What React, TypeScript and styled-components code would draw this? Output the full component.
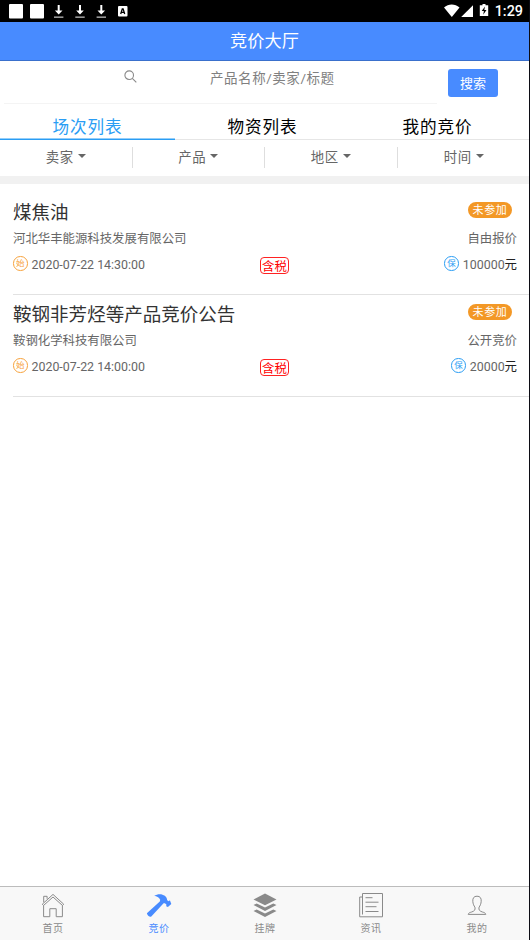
import React from "react";
import styled, { createGlobalStyle } from "styled-components";

const Global = createGlobalStyle`
  * { box-sizing: border-box; }
  body { margin: 0; background: #fff; }
`;

const Screen = styled.div`
  width: 530px;
  height: 940px;
  display: flex;
  flex-direction: column;
  background: #fff;
  border-right: 1px solid #0c0c14;
  font-family: Roboto, "Noto Sans CJK SC", sans-serif;
  color: #666;
  overflow: hidden;
  white-space: nowrap;
`;

const StatusBar = styled.div`
  height: 22px;
  flex: none;
  display: flex;
  justify-content: space-between;
  background: #000;
`;

const Clock = styled.span`
  color: #fff;
  font-size: 14.4px;
  line-height: 23px;
  font-weight: 500;
  margin-right: 6px;
`;

const StatusRight = styled.div`
  display: flex;
`;

const Header = styled.h1`
  height: 39px;
  flex: none;
  margin: 0;
  background: #488bff;
  border-bottom: 1px solid #3a70cc;
  color: #fff;
  font-size: 17.2px;
  font-weight: 400;
  line-height: 38px;
  text-align: center;
`;

const SearchRow = styled.form`
  height: 50px;
  flex: none;
  display: flex;
`;

const SearchField = styled.div`
  width: 433px;
  height: 43px;
  margin-left: 4px;
  padding-left: 120px;
  border-bottom: 1px solid #f4f4f4;
  display: flex;
  font-size: 13.5px;
  letter-spacing: 0.55px;
  line-height: 35px;
  color: #808080;
`;

const SearchIcon = styled.svg`
  width: 13px;
  height: 13px;
  margin: 9px 73px 0 0;
`;

const SearchButton = styled.button`
  width: 50px;
  height: 28px;
  margin: 8px 0 0 11px;
  padding: 0;
  border: 0;
  border-radius: 3px;
  background: #488bff;
  color: #fff;
  font: 13px/27px Roboto, "Noto Sans CJK SC", sans-serif;
`;

const Tabs = styled.nav`
  height: 29px;
  flex: none;
  display: flex;
  box-shadow: inset 0 -1px #e6e6e6;
`;

const Tab = styled.a<{ $active?: boolean }>`
  width: 175px;
  height: 29px;
  box-shadow: ${(p) => (p.$active ? "inset 0 -1.5px #2a9df4" : "none")};
  color: ${(p) => (p.$active ? "#2a9df4" : "#000")};
  font-size: 16.6px;
  letter-spacing: 0.9px;
  line-height: 34px;
  text-align: center;
`;

const Filters = styled.div`
  height: 43.5px;
  flex: none;
  display: grid;
  grid-template-columns: repeat(4, 132.5px);
  border-bottom: 8px solid #f1f1f1;
`;

const Filter = styled.div`
  height: 21px;
  margin-top: 7px;
  display: flex;
  justify-content: center;
  border-right: 1px solid #dedede;
  font-size: 13.4px;
  letter-spacing: 0.6px;
  line-height: 22px;
  &:last-child { border-right: 0; }
`;

const Caret = styled.i`
  width: 0;
  height: 0;
  margin: 7px 0 0 4px;
  border: 4px solid transparent;
  border-top: 4.5px solid #666;
  border-bottom: 0;
`;

const List = styled.main`
  flex: 1;
  padding: 9.5px 0 0 13px;
`;

const Card = styled.article`
  height: 102px;
  padding-right: 12px;
  border-bottom: 1px solid #e2e2e2;
  font-size: 12.4px;
`;

const Line = styled.div<{ $h: number }>`
  height: ${(p) => p.$h}px;
  line-height: ${(p) => p.$h}px;
  display: flex;
  justify-content: space-between;
`;

const Title = styled.h2`
  margin: 0;
  color: #333;
  font-size: 18.55px;
  line-height: 41px;
  font-weight: 400;
`;

const Badge = styled.span`
  width: 44px;
  height: 16px;
  margin: 9px 5px 0 0;
  border-radius: 8px;
  background: #f39826;
  color: #fff;
  font-size: 11px;
  letter-spacing: 0.6px;
  line-height: 17px;
  text-align: center;
`;

const MetaRow = styled.div`
  display: grid;
  grid-template-columns: 247px 29px 1fr;
  height: 34px;
  line-height: 37px;
`;

const Meta = styled.div<{ $end?: boolean }>`
  display: flex;
  justify-content: ${(p) => (p.$end ? "flex-end" : "flex-start")};
`;

const Circle = styled.span<{ $tone: string }>`
  width: 14.5px;
  height: 14.5px;
  margin: 10px 4px 0 0;
  border: 1px solid ${(p) => p.$tone};
  border-radius: 50%;
  color: ${(p) => p.$tone};
  font-size: 8.5px;
  line-height: 12px;
  text-align: center;
`;

const Amount = styled.span`
  line-height: 38px;
`;

const Unit = styled.span`
  color: #222;
`;

const TaxTag = styled.span`
  height: 17px;
  margin-top: 11px;
  border: 1px solid #f22;
  border-radius: 4px;
  color: #f00;
  font-size: 12.4px;
  line-height: 17px;
  text-align: center;
`;

const TabBar = styled.footer`
  height: 54px;
  flex: none;
  display: grid;
  grid-template-columns: repeat(5, 106px);
  background: #f8f8f8;
  border-top: 1px solid #bcbcbc;
`;

const TabItem = styled.a<{ $active?: boolean }>`
  display: flex;
  flex-direction: column;
  align-items: center;
  padding-top: 4px;
  color: ${(p) => (p.$active ? "#488bff" : "#8a8a8a")};
  font-size: 10px;
  letter-spacing: 0.4px;
  line-height: 20px;
`;

const TabIcon = styled.svg`
  width: 28px;
  height: 28px;
  fill: none;
  stroke: currentColor;
  stroke-width: 1;
`;

const auctions = [
  { title: "煤焦油", company: "河北华丰能源科技发展有限公司", mode: "自由报价", time: "2020-07-22 14:30:00", deposit: "100000" },
  { title: "鞍钢非芳烃等产品竞价公告", company: "鞍钢化学科技有限公司", mode: "公开竞价", time: "2020-07-22 14:00:00", deposit: "20000" },
];

const nav = [
  {
    label: "首页",
    icon: (
      <>
        <path d="M3.3 13.2 14 3.4l10.7 9.8-1.2 1.3L14 6l-9.5 8.5z" />
        <path d="M4.7 11.3V5.3h3.4v2.5" />
        <path d="M4.6 14.5v11.2h6.2v-8h6.4v8h6.2V14.5" />
      </>
    ),
  },
  {
    label: "竞价",
    active: true,
    icon: (
      <path
        fill="currentColor"
        stroke="none"
        d="M9.2 4.8C12.5 2.6 17 2.6 19.8 4.7c1.6 1.2 2.2 2.8 2.4 4.5l1.5 1.1 1.2-1 1.4 3.6-3.4 3-1.7-.6.2-1.9-1.5-1.2-1.3.1L6.3 25.4c-1.2 1-4.2-1-4.4-3.2L14.8 10.6l.4-1.9C13.8 6.3 11.9 5.2 9.2 4.8z"
      />
    ),
  },
  {
    label: "挂牌",
    icon: (
      <g fill="currentColor" stroke="none">
        <path d="m14 2.5 11.5 6L14 14.3 2.5 8.5z" />
        <path d="m2.5 14 3.2-1.5 8.3 4.1 8.3-4.1 3.2 1.5L14 20z" />
        <path d="m2.5 20 3.2-1.5 8.3 4.1 8.3-4.1 3.2 1.5L14 26z" />
      </g>
    ),
  },
  {
    label: "资讯",
    icon: (
      <>
        <path d="M5.5 2.5h20v23.3h-22.8V6h2.8z" />
        <path d="M5.5 6v17.5M8.5 6.7h7M8.5 11.2h13M8.5 15.7h11M8.5 20.5h13" />
      </>
    ),
  },
  {
    label: "我的",
    icon: (
      <path d="M14 5.2c-3.2 0-4.4 2-4.2 5.1.2 2.6 1.1 4.6 2.1 5.8.8 3-.7 4-3.3 4.9-2 .6-3 .9-3.4 2.4h17.6c-.4-1.5-1.4-1.8-3.4-2.4-2.6-.9-4.1-1.9-3.3-4.9 1-1.2 1.9-3.2 2.1-5.8.2-3.1-1-5.1-4.2-5.1z" />
    ),
  },
];

function StatusIcons() {
  return (
    <svg width="140" height="22" viewBox="0 0 140 22" fill="#fff">
      <rect x="9" y="4" width="14" height="14.5" rx="1" />
      <rect x="30" y="4" width="14" height="14.5" rx="1" />
      {[58.7, 80, 101.3].map((x) => (
        <g key={x} transform={`translate(${x} 0)`}>
          <path d="M-1 5h2v5.5h2.8L0 14.5l-3.8-4H-1z" />
          <path d="M-4.7 16.5h9.4v1.3h-9.4z" fill="#bbb" />
        </g>
      ))}
      <rect x="118" y="6" width="9.5" height="10.5" rx="1" />
      <path d="m120.7 14 1.6-5.2h.8l1.6 5.2M121.3 12.4h2.8" fill="none" stroke="#000" strokeWidth="1.3" />
    </svg>
  );
}

function SignalIcons() {
  return (
    <svg width="51" height="22" viewBox="0 0 51 22" fill="#fff">
      <path d="M0 7.5C4.5 3.6 11 3.6 15.5 7.5L7.8 17z" />
      <path d="M29 5.2V17H17.2z" />
      <path d="M38.5 4h3v1.3h2.7V16h-8.4V5.3h2.7z" />
      <path d="m41 6.5-3.3 4.6h2.2l-.7 3.6 3.3-4.8h-2.2z" fill="#000" />
    </svg>
  );
}

export default function App() {
  return (
    <Screen>
      <Global />
      <StatusBar>
        <StatusIcons />
        <StatusRight>
          <SignalIcons />
          <Clock>1:29</Clock>
        </StatusRight>
      </StatusBar>
      <Header>竞价大厅</Header>
      <SearchRow>
        <SearchField>
          <SearchIcon viewBox="0 0 13 13" fill="none" stroke="#888" strokeWidth="1.1">
            <circle cx="5.2" cy="5.2" r="4.3" />
            <path d="m8.3 8.3 4 4" />
          </SearchIcon>
          <span>产品名称/卖家/标题</span>
        </SearchField>
        <SearchButton type="button">搜索</SearchButton>
      </SearchRow>
      <Tabs>
        <Tab $active>场次列表</Tab>
        <Tab>物资列表</Tab>
        <Tab>我的竞价</Tab>
      </Tabs>
      <Filters>
        {["卖家", "产品", "地区", "时间"].map((name) => (
          <Filter key={name}>
            {name}
            <Caret />
          </Filter>
        ))}
      </Filters>
      <List>
        {auctions.map((a) => (
          <Card key={a.title}>
            <Line $h={38}>
              <Title>{a.title}</Title>
              <Badge>未参加</Badge>
            </Line>
            <Line $h={15}>
              <span>{a.company}</span>
              <span>{a.mode}</span>
            </Line>
            <MetaRow>
              <Meta>
                <Circle $tone="#f7a23c">始</Circle>
                <span>{a.time}</span>
              </Meta>
              <TaxTag>含税</TaxTag>
              <Meta $end>
                <Circle $tone="#2a9df4">保</Circle>
                <Amount>
                  {a.deposit}
                  <Unit>元</Unit>
                </Amount>
              </Meta>
            </MetaRow>
          </Card>
        ))}
      </List>
      <TabBar>
        {nav.map((n) => (
          <TabItem key={n.label} $active={n.active}>
            <TabIcon viewBox="0 0 28 28">{n.icon}</TabIcon>
            {n.label}
          </TabItem>
        ))}
      </TabBar>
    </Screen>
  );
}
